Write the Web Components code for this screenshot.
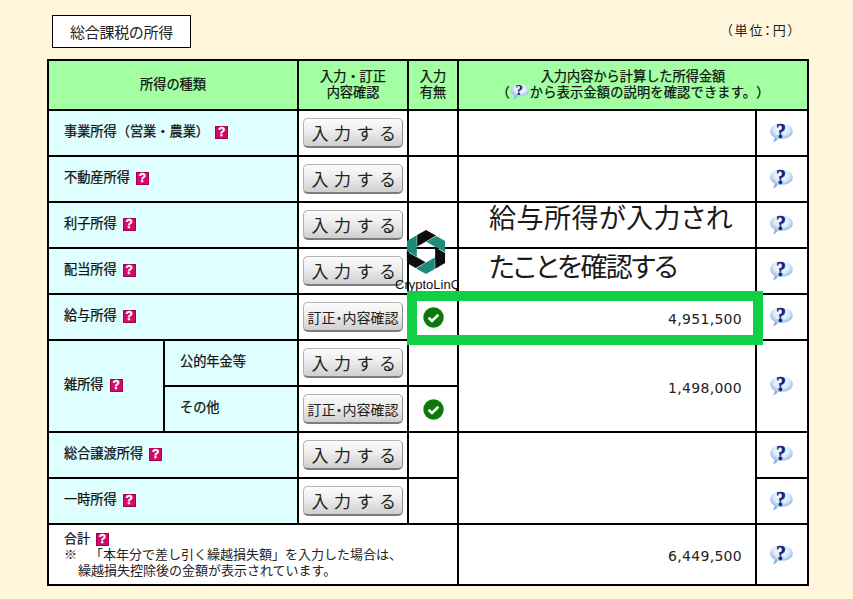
<!DOCTYPE html>
<html lang="ja">
<head>
<meta charset="utf-8">
<title>総合課税の所得</title>
<style>
  html, body { margin: 0; padding: 0; background: #fff6dc; }
  body { font-family: "Noto Sans CJK JP", "Liberation Sans", sans-serif; color: #111; text-spacing-trim: space-all; }
  .a { grid-column: 1 / 3; }
  .b { grid-column: 2; }
  .btn { grid-column: 3; }
  .has { grid-column: 4; }
  .amt { grid-column: 5; }
  .q { grid-column: 6; }
  .head-wide { grid-column: 5 / 7; }
  .misc { grid-column: 1; grid-row: 7 / 9; }
  .amt-misc { grid-row: 7 / 9; }
  .q-misc { grid-row: 7 / 9; }
  .amt-last { grid-row: 9 / 11; }
  .total { grid-column: 1 / 5; }
  .wide-line { letter-spacing: .2px; }
  .line1 { letter-spacing: .5px; }
  .line2 { letter-spacing: -1.6px; }
</style>
</head>
<body>

<script>
// ---- small icons ----
class HelpMark extends HTMLElement {
  constructor() {
    super();
    this.attachShadow({ mode: 'open' }).innerHTML = `
      <style>
        :host { display: inline-block; width: 13px; height: 13px; vertical-align: 0; margin-left: 6px; }
        div {
          box-sizing: border-box; width: 13px; height: 13px;
          background: #d00a6c; border: 1px solid #a80050;
          color: #fff; font: bold 12px/11px "Liberation Sans", sans-serif; text-align: center;
          -webkit-text-stroke: .3px #fff;
        }
      </style>
      <div>?</div>`;
  }
}
customElements.define('help-mark', HelpMark);

class BubbleIcon extends HTMLElement {
  constructor() {
    super();
    const id = 'g' + Math.random().toString(36).slice(2);
    this.attachShadow({ mode: 'open' }).innerHTML = `
      <style>
        :host { display: inline-block; position: relative; width: 23px; height: 20px; margin-right: 1px; letter-spacing: 0; }
        svg { display: block; width: 100%; height: 100%; }
        span {
          position: absolute; left: 0; right: 1px; top: 0; text-align: center;
          font: bold 20px/16px "Liberation Serif", serif; color: #14207c; -webkit-text-stroke: .4px #14207c;
        }
        :host([small]) { width: 18px; height: 16px; vertical-align: -3px; margin: 0 1px; }
        :host([small]) span { font-size: 15px; line-height: 13px; -webkit-text-stroke: .2px #14207c; }
      </style>
      <svg viewBox="0 0 23 20">
        <defs>
          <radialGradient id="${id}" cx=".5" cy=".28" r=".62">
            <stop offset="0" stop-color="#ffffff"/>
            <stop offset=".55" stop-color="#dcebfb"/>
            <stop offset="1" stop-color="#7fb0e6"/>
          </radialGradient>
        </defs>
        <path d="M11.5.5C17.8.5 22.8 3.6 22.8 8.2S17.8 15.8 11.5 15.8C10 15.8 9 15.7 8 15.4 7 17 5.5 18.7 3 19.4 4 18 4.6 16 4.4 14.4 1.8 13 .2 10.8.2 8.2.2 3.6 5.2.5 11.5.5Z" fill="url(#${id})"/>
      </svg>
      <span>?</span>`;
  }
}
customElements.define('bubble-icon', BubbleIcon);

class CheckMark extends HTMLElement {
  constructor() {
    super();
    this.attachShadow({ mode: 'open' }).innerHTML = `
      <style>
        :host { display: block; width: 21px; height: 21px; }
        svg { display: block; }
      </style>
      <svg width="21" height="21" viewBox="0 0 21 21">
        <circle cx="10.5" cy="10.5" r="10.2" fill="#0b7a0b"/>
        <path d="M5.6 10.8l3.4 3.2 6.4-6.2" fill="none" stroke="#fff" stroke-width="2.6"/>
      </svg>`;
  }
}
customElements.define('check-mark', CheckMark);

// ---- push button ----
class EntryButton extends HTMLElement {
  constructor() {
    super();
    this.attachShadow({ mode: 'open' }).innerHTML = `
      <style>
        :host { display: block; width: 100px; height: 30px; }
        button {
          box-sizing: border-box; width: 100%; height: 100%; padding: 0; margin: 0;
          border: 1px solid #b4b4b4; border-bottom: 2px solid #7c7c7c; border-right-color: #8c8c8c;
          border-radius: 5px;
          background: linear-gradient(#fbfbfb, #efefef 40%, #cfcfcf);
          color: #222; font-family: inherit; white-space: nowrap;
          font-size: 17px; letter-spacing: 5.5px; text-indent: 7px; line-height: 26px;
        }
        :host([edit]) button {
          font-size: 14px; letter-spacing: 0; text-indent: 0;
          font-feature-settings: "palt";
        }
      </style>
      <button type="button"><slot></slot></button>`;
  }
}
customElements.define('entry-button', EntryButton);

// ---- table cell ----
class SheetCell extends HTMLElement {
  constructor() {
    super();
    this.attachShadow({ mode: 'open' }).innerHTML = `
      <style>
        :host {
          display: flex; align-items: center; justify-content: center; min-width: 0;
          background: #fff; font-size: 13.2px; line-height: 16px; box-sizing: border-box;
        }
        :host([kind=head]) { background: #a2ffa2; text-align: center; padding-bottom: 2px; -webkit-text-stroke: .25px #111; }
        :host([kind=label]) {
          background: #dfffff; justify-content: flex-start; padding: 0 0 4px 15px;
          -webkit-text-stroke: .25px #111;
        }
        :host([kind=amount]) {
          justify-content: flex-end; padding: 3px 13px 0 0; color: #222;
          font: 14px "DejaVu Sans", sans-serif; letter-spacing: .3px;
        }
      </style>
      <slot></slot>`;
  }
}
customElements.define('sheet-cell', SheetCell);

// ---- total row text ----
class TotalNote extends HTMLElement {
  constructor() {
    super();
    this.attachShadow({ mode: 'open' }).innerHTML = `
      <style>
        :host { display: block; width: 100%; padding: 0 0 2px 15px; box-sizing: border-box; color: #222; font-size: 13px; }
        .t { -webkit-text-stroke: .25px #111; color: #111; }
        .n { white-space: nowrap; line-height: 15.5px; }
        .i { padding-left: 14px; }
      </style>
      <div class="t">合計<slot></slot></div>
      <div class="n">※　「本年分で差し引く繰越損失額」を入力した場合は、</div>
      <div class="n i">繰越損失控除後の金額が表示されています。</div>`;
  }
}
customElements.define('total-note', TotalNote);

// ---- overlays: logo, caption and highlight frame lying over the table ----
class LogoMark extends HTMLElement {
  constructor() {
    super();
    const blade = '-8.8,-17 0,-22 9.9,-16.5 0,-10.5 -8.8,-5.5';
    const blades = [0, 60, 120, 180, 240, 300].map((a, i) =>
      `<polygon points="${blade}" transform="rotate(${a})" fill="${i % 2 ? '#1f8a78' : '#0d0d0d'}"/>`).join('');
    this.attachShadow({ mode: 'open' }).innerHTML = `
      <style>
        :host { position: absolute; left: 348px; top: 228px; width: 64px; height: 63px; display: block; overflow: hidden; }
        svg { position: absolute; left: 7px; top: 0; }
        div {
          position: absolute; left: 0; top: 49px; white-space: nowrap;
          font: 13px/16px "Liberation Sans", sans-serif; color: #111;
        }
      </style>
      <svg width="48" height="48" viewBox="-24 -24 48 48">${blades}</svg>
      <div>CryptoLinQ</div>`;
  }
}
customElements.define('logo-mark', LogoMark);

class CalloutText extends HTMLElement {
  constructor() {
    super();
    this.attachShadow({ mode: 'open' }).innerHTML = `
      <style>
        :host {
          position: absolute; left: 442px; top: 192px; display: block; white-space: nowrap;
          font-size: 27px; line-height: 49px; color: #1a1a1a; font-feature-settings: "palt";
        }
      </style>
      <slot></slot>`;
  }
}
customElements.define('callout-text', CalloutText);

class HighlightFrame extends HTMLElement {
  constructor() {
    super();
    this.attachShadow({ mode: 'open' }).innerHTML = `
      <style>
        :host {
          position: absolute; left: 360px; top: 291px; width: 356px; height: 54px;
          box-sizing: border-box; border: 10px solid #10d048; display: block;
        }
      </style>`;
  }
}
customElements.define('highlight-frame', HighlightFrame);

// ---- whole sheet ----
class IncomeSheet extends HTMLElement {
  constructor() {
    super();
    this.attachShadow({ mode: 'open' }).innerHTML = `
      <style>
        :host { display: block; width: 762px; margin-left: 47px; padding-top: 15px; position: relative; }
        .top { display: flex; justify-content: space-between; align-items: flex-start; margin-bottom: 11px; padding: 0 13px 0 5px; }
        .title {
          box-sizing: border-box; width: 139px; height: 33px; border: 1.5px solid #000; background: #fff;
          display: flex; align-items: center; justify-content: center; font-size: 15px; letter-spacing: -.3px; color: #222;
        }
        .unit { font-size: 13px; line-height: 16px; margin-top: 7px; color: #222; font-feature-settings: "palt"; letter-spacing: 1.9px; }
        .grid {
          display: grid; background: #000; padding: 2px; gap: 2px;
          grid-template-columns: 114px 132px 108px 48px 296px 50px;
          grid-template-rows: 48px repeat(9, 44px) 59px;
        }
      </style>
      <div class="top">
        <div class="title">総合課税の所得</div>
        <div class="unit">（単位：円）</div>
      </div>
      <div class="grid"><slot></slot></div>
      <slot name="over"></slot>`;
  }
}
customElements.define('income-sheet', IncomeSheet);

// rows that only differ by name and state
const rows = [
  ['事業所得（営業・農業）', 0, ''],
  ['不動産所得', 0, ''],
  ['利子所得', 0, ''],
  ['配当所得', 0, ''],
  ['給与所得', 1, '4,951,500']
];
const btn = done => done
  ? '<entry-button edit>訂正・内容確認</entry-button>'
  : '<entry-button>入力する</entry-button>';
const bubble = '<bubble-icon></bubble-icon>';
const chk = done => done ? '<check-mark></check-mark>' : '';

let html = `
  <sheet-cell kind="head" class="a">所得の種類</sheet-cell>
  <sheet-cell kind="head" class="btn"><div>入力・訂正<br>内容確認</div></sheet-cell>
  <sheet-cell kind="head" class="has"><div>入力<br>有無</div></sheet-cell>
  <sheet-cell kind="head" class="head-wide"><div>入力内容から計算した所得金額<br><span class="wide-line">（<bubble-icon small></bubble-icon>から表示金額の説明を確認できます。）</span></div></sheet-cell>`;
rows.forEach(r => {
  html += `
  <sheet-cell kind="label" class="a"><span>${r[0]}<help-mark></help-mark></span></sheet-cell>
  <sheet-cell class="btn">${btn(r[1])}</sheet-cell>
  <sheet-cell class="has">${chk(r[1])}</sheet-cell>
  <sheet-cell kind="amount" class="amt">${r[2]}</sheet-cell>
  <sheet-cell class="q">${bubble}</sheet-cell>`;
});
html += `
  <sheet-cell kind="label" class="misc"><span>雑所得<help-mark></help-mark></span></sheet-cell>
  <sheet-cell kind="label" class="b" style="grid-row:7">公的年金等</sheet-cell>
  <sheet-cell class="btn" style="grid-row:7">${btn(0)}</sheet-cell>
  <sheet-cell class="has" style="grid-row:7"></sheet-cell>
  <sheet-cell kind="amount" class="amt amt-misc">1,498,000</sheet-cell>
  <sheet-cell class="q q-misc">${bubble}</sheet-cell>
  <sheet-cell kind="label" class="b" style="grid-row:8">その他</sheet-cell>
  <sheet-cell class="btn" style="grid-row:8">${btn(1)}</sheet-cell>
  <sheet-cell class="has" style="grid-row:8">${chk(1)}</sheet-cell>
  <sheet-cell kind="label" class="a" style="grid-row:9"><span>総合譲渡所得<help-mark></help-mark></span></sheet-cell>
  <sheet-cell class="btn" style="grid-row:9">${btn(0)}</sheet-cell>
  <sheet-cell class="has" style="grid-row:9"></sheet-cell>
  <sheet-cell kind="amount" class="amt amt-last"></sheet-cell>
  <sheet-cell class="q" style="grid-row:9">${bubble}</sheet-cell>
  <sheet-cell kind="label" class="a" style="grid-row:10"><span>一時所得<help-mark></help-mark></span></sheet-cell>
  <sheet-cell class="btn" style="grid-row:10">${btn(0)}</sheet-cell>
  <sheet-cell class="has" style="grid-row:10"></sheet-cell>
  <sheet-cell class="q" style="grid-row:10">${bubble}</sheet-cell>
  <sheet-cell class="total"><total-note><help-mark></help-mark></total-note></sheet-cell>
  <sheet-cell kind="amount" class="amt">6,449,500</sheet-cell>
  <sheet-cell class="q">${bubble}</sheet-cell>
  <logo-mark slot="over"></logo-mark>
  <callout-text slot="over"><span class="line1">給与所得が入力され</span><br><span class="line2">たことを確認する</span></callout-text>
  <highlight-frame slot="over"></highlight-frame>`;

const sheet = document.createElement('income-sheet');
sheet.innerHTML = html;
document.body.appendChild(sheet);
</script>
</body>
</html>
